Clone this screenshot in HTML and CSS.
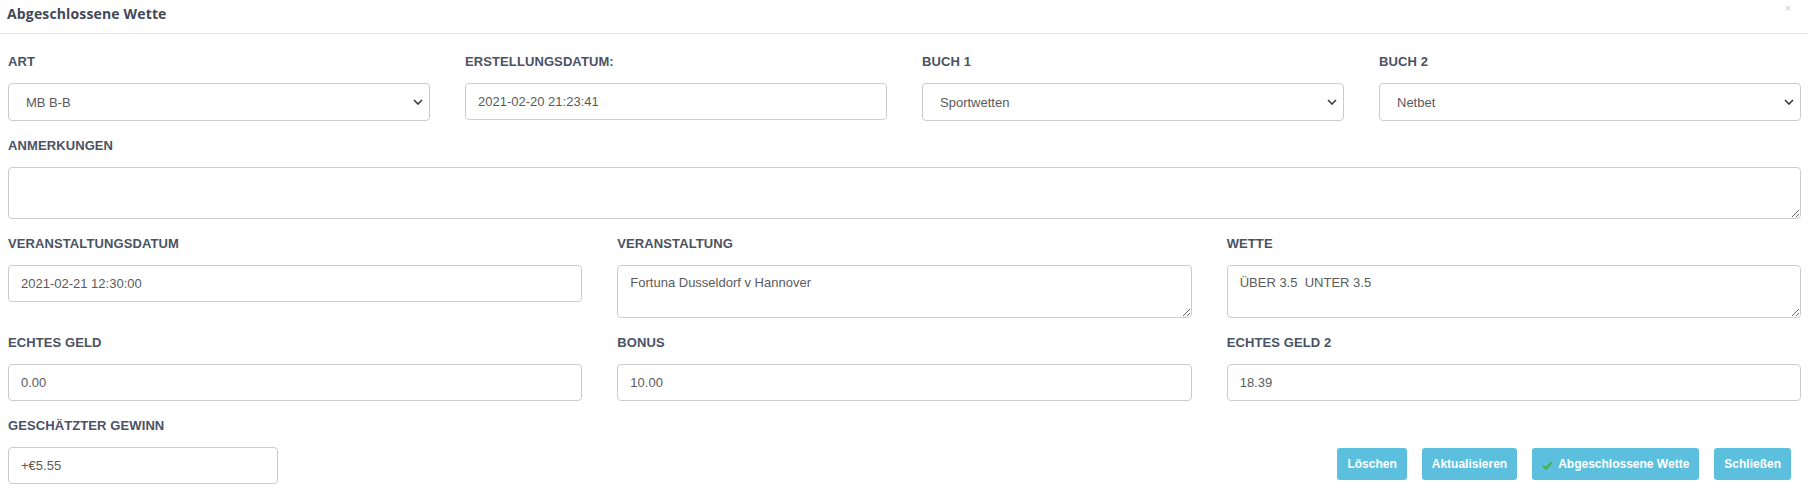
FILE: index.html
```html
<!DOCTYPE html>
<html lang="de">
<head>
<meta charset="utf-8">
<title>Abgeschlossene Wette</title>
<link rel="stylesheet" href="styles.css">
</head>
<body>
<div class="modal">
  <div class="modal-header">
    <h4 class="modal-title">Abgeschlossene Wette</h4>
    <button class="close" type="button">×</button>
  </div>
  <div class="modal-body">
    <div class="row cols-4">
      <div class="group">
        <label class="label">ART</label>
        <div class="select-wrap">
          <select class="control select"><option>MB B-B</option></select>
          <svg class="chev" width="10" height="6" viewBox="0 0 10 6"><polyline points="1,1 5,5 9,1" fill="none" stroke="#3a3a3a" stroke-width="1.6"/></svg>
        </div>
      </div>
      <div class="group">
        <label class="label">ERSTELLUNGSDATUM:</label>
        <input class="control" type="text" value="2021-02-20 21:23:41">
      </div>
      <div class="group">
        <label class="label">BUCH 1</label>
        <div class="select-wrap">
          <select class="control select"><option>Sportwetten</option></select>
          <svg class="chev" width="10" height="6" viewBox="0 0 10 6"><polyline points="1,1 5,5 9,1" fill="none" stroke="#3a3a3a" stroke-width="1.6"/></svg>
        </div>
      </div>
      <div class="group">
        <label class="label">BUCH 2</label>
        <div class="select-wrap">
          <select class="control select"><option>Netbet</option></select>
          <svg class="chev" width="10" height="6" viewBox="0 0 10 6"><polyline points="1,1 5,5 9,1" fill="none" stroke="#3a3a3a" stroke-width="1.6"/></svg>
        </div>
      </div>
    </div>

    <div class="group">
      <label class="label">ANMERKUNGEN</label>
      <textarea class="control area area-notes"></textarea>
    </div>

    <div class="row cols-3">
      <div class="group">
        <label class="label">VERANSTALTUNGSDATUM</label>
        <input class="control" type="text" value="2021-02-21 12:30:00">
      </div>
      <div class="group">
        <label class="label">VERANSTALTUNG</label>
        <textarea class="control area">Fortuna Dusseldorf v Hannover</textarea>
      </div>
      <div class="group">
        <label class="label">WETTE</label>
        <textarea class="control area">ÜBER 3.5  UNTER 3.5</textarea>
      </div>
    </div>

    <div class="row cols-3">
      <div class="group">
        <label class="label">ECHTES GELD</label>
        <input class="control" type="text" value="0.00">
      </div>
      <div class="group">
        <label class="label">BONUS</label>
        <input class="control" type="text" value="10.00">
      </div>
      <div class="group">
        <label class="label">ECHTES GELD 2</label>
        <input class="control" type="text" value="18.39">
      </div>
    </div>

    <div class="footer-row">
      <div class="group group-small">
        <label class="label">GESCHÄTZTER GEWINN</label>
        <input class="control" type="text" value="+€5.55">
      </div>
      <div class="buttons">
        <button class="btn" type="button">Löschen</button>
        <button class="btn" type="button">Aktualisieren</button>
        <button class="btn" type="button"><svg class="check" width="11" height="9" viewBox="0 0 11 9"><path d="M1 4.8 L4 7.6 L10 1.2" fill="none" stroke="#4cae4c" stroke-width="2.2"/></svg>Abgeschlossene Wette</button>
        <button class="btn" type="button">Schließen</button>
      </div>
    </div>
  </div>
</div>
</body>
</html>
```

FILE: styles.css
```css
* { box-sizing: border-box; }

html, body {
  margin: 0;
  padding: 0;
  background: #ffffff;
}

body {
  font-family: "Liberation Sans", Arial, sans-serif;
  font-size: 13px;
  color: #555555;
}

.modal {
  width: 1808px;
  min-height: 501px;
  background: #ffffff;
}

.modal-header {
  position: relative;
  height: 34px;
  padding: 4px 7px 0 7px;
  border-bottom: 1px solid #e5e5e5;
}

.modal-title {
  margin: 0;
  font-family: "Open Sans", sans-serif;
  font-size: 14px;
  font-weight: 700;
  line-height: 20px;
  letter-spacing: 0.15px;
  color: #414959;
}

.close {
  position: absolute;
  top: 1px;
  right: 17px;
  padding: 0;
  border: 0;
  background: transparent;
  font-family: "Liberation Sans", Arial, sans-serif;
  font-size: 11px;
  line-height: 14px;
  color: #c8c8c8;
}

.modal-body {
  padding: 19px 7px 0 8px;
}

.row {
  display: grid;
  column-gap: 35px;
}

.cols-4 { grid-template-columns: repeat(4, 1fr); }
.cols-3 { grid-template-columns: repeat(3, 1fr); }

.group {
  margin-bottom: 16px;
}

.label {
  display: block;
  margin-bottom: 12px;
  font-family: "Liberation Sans", Arial, sans-serif;
  font-size: 13px;
  font-weight: 700;
  line-height: 18px;
  letter-spacing: 0.1px;
  color: #4a5264;
}

.control {
  display: block;
  width: 100%;
  height: 37px;
  margin: 0;
  padding: 0 12px;
  border: 1px solid #cccccc;
  border-radius: 4px;
  background: #ffffff;
  font-family: "Liberation Sans", Arial, sans-serif;
  font-size: 13px;
  color: #5a5a5a;
  outline: none;
}

.select-wrap {
  position: relative;
}

.select {
  height: 38px;
  padding-left: 17px;
  -webkit-appearance: none;
  appearance: none;
}

.chev {
  position: absolute;
  top: 16px;
  right: 7px;
  pointer-events: none;
}

.area {
  height: 53px;
  padding: 8px 12px;
  line-height: 18px;
  font-family: "Liberation Sans", Arial, sans-serif;
}

.area-notes {
  height: 52px;
}

.footer-row {
  display: flex;
  justify-content: space-between;
  align-items: flex-end;
}

.group-small {
  width: 270px;
}

.buttons {
  display: flex;
  gap: 15px;
  margin: 0 10px 20px 0;
}

.btn {
  display: flex;
  align-items: center;
  height: 32px;
  padding: 0 10px;
  border: 0;
  border-radius: 3px;
  background: #5bbfdd;
  font-family: "Liberation Sans", Arial, sans-serif;
  font-size: 12px;
  font-weight: 700;
  color: #ffffff;
}

.check {
  margin-right: 5px;
  margin-top: 2px;
}
```
